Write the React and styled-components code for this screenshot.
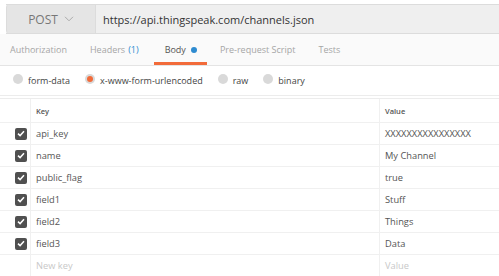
import React from 'react';
import styled, { createGlobalStyle } from 'styled-components';

const GlobalStyle = createGlobalStyle`
    html, body {
        margin: 0;
        padding: 0;
        background: #fff;
        font-family: "Open Sans", "Liberation Sans", sans-serif;
    }
`;

const Page = styled.div`
    width: 499px;
    height: 276px;
    overflow: hidden;
    padding-top: 4px;
    box-sizing: border-box;
`;

// 요청 바
const RequestBar = styled.div`
    display: flex;
    height: 30px;
    margin-left: 6px;
    border-top: 1px solid #dcdcdc;
    border-bottom: 1px solid #dcdcdc;
    box-sizing: border-box;
    background: #efefef;
`;

const Method = styled.div`
    width: 88px;
    display: flex;
    align-items: center;
    justify-content: center;
    gap: 6px;
    background: #e5e5e5;
    border-left: 1px solid #dcdcdc;
    border-right: 1px solid #dcdcdc;
    border-radius: 3px 0 0 3px;
    color: #777;
    font-size: 12px;
`;

const Url = styled.div`
    flex: 1;
    display: flex;
    align-items: center;
    padding-left: 7px;
    color: #333;
    font-size: 11px;
`;

const Tabs = styled.div`
    display: flex;
    height: 32px;
    background: #fafafa;
    border-bottom: 1px solid #e4e4e4;
    box-sizing: border-box;
    padding-left: 10px;
    gap: 23px;
`;

const Tab = styled.div`
    display: flex;
    align-items: center;
    font-size: 9px;
    color: #a6a6a6;
    padding-top: 3px;
    border-bottom: 3px solid transparent;
    ${p => p.$active && `
        color: #555;
        padding: 3px 10px 0 11px;
        margin: 0 -10px 0 -8px;
        border-bottom-color: #f26b3a;
    `}
`;

const Count = styled.span`
    color: #2e8bd0;
    margin-left: 3px;
`;

const Dot = styled.span`
    width: 6px;
    height: 6px;
    border-radius: 50%;
    background: #2e8bd0;
    margin-left: 5px;
`;

const Radios = styled.div`
    display: flex;
    align-items: center;
    height: 30px;
    padding-left: 13px;
    gap: 15px;
    border-bottom: 1px solid #ececec;
    box-sizing: border-box;
`;

const RadioItem = styled.div`
    display: flex;
    align-items: center;
    gap: 5px;
    font-size: 9px;
    color: #444;
`;

const RadioCircle = styled.span`
    width: 10px;
    height: 10px;
    border-radius: 50%;
    background: #d9d9d9;
    display: flex;
    align-items: center;
    justify-content: center;
    margin-top: -4px;
    &::after {
        content: '';
        width: 6px;
        height: 6px;
        border-radius: 50%;
        background: ${p => (p.$checked ? '#f26b3a' : 'transparent')};
    }
`;

const Table = styled.div`
    margin-top: 2px;
    border-top: 1px solid #ececec;
`;

const Row = styled.div`
    display: grid;
    grid-template-columns: 30px 349px 1fr;
    height: ${p => (p.$head ? '24px' : '22px')};
    border-bottom: 1px solid #f0f0f0;
    box-sizing: border-box;
`;

const Cell = styled.div`
    display: flex;
    align-items: center;
    padding-left: ${p => (p.$check ? '0' : '5px')};
    justify-content: ${p => (p.$check ? 'flex-end' : 'flex-start')};
    border-left: ${p => (p.$check ? 'none' : '1px solid #f0f0f0')};
    font-size: ${p => (p.$head ? '7.5px' : '9.3px')};
    font-weight: ${p => (p.$head ? 600 : 400)};
    color: ${p => (p.$muted ? '#c8c8c8' : '#555')};
    padding-right: ${p => (p.$check ? '3px' : '0')};
`;

const Check = styled.span`
    width: 12px;
    height: 12px;
    border-radius: 2px;
    background: #505050;
    display: flex;
    align-items: center;
    justify-content: center;
`;

const rows = [
    ['api_key', 'XXXXXXXXXXXXXXXX'],
    ['name', 'My Channel'],
    ['public_flag', 'true'],
    ['field1', 'Stuff'],
    ['field2', 'Things'],
    ['field3', 'Data'],
];

function Tick() {
    return (
        <svg width="8" height="7" viewBox="0 0 8 7">
            <path d="M1 3.6 L3.1 5.6 L7 1.3" fill="none" stroke="#fff" strokeWidth="1.5" />
        </svg>
    );
}

function Chevron() {
    return (
        <svg width="10" height="6" viewBox="0 0 10 6">
            <path d="M1 0.8 L5 4.8 L9 0.8" fill="none" stroke="#aaa" strokeWidth="1" />
        </svg>
    );
}

export default function App() {
    return (
        <Page>
            <GlobalStyle />
            <RequestBar>
                <Method>POST <Chevron /></Method>
                <Url>https://api.thingspeak.com/channels.json</Url>
            </RequestBar>
            <Tabs>
                <Tab>Authorization</Tab>
                <Tab>Headers<Count>(1)</Count></Tab>
                <Tab $active>Body<Dot /></Tab>
                <Tab>Pre-request Script</Tab>
                <Tab>Tests</Tab>
            </Tabs>
            <Radios>
                <RadioItem><RadioCircle />form-data</RadioItem>
                <RadioItem><RadioCircle $checked />x-www-form-urlencoded</RadioItem>
                <RadioItem><RadioCircle />raw</RadioItem>
                <RadioItem><RadioCircle />binary</RadioItem>
            </Radios>
            <Table>
                <Row $head>
                    <Cell $check />
                    <Cell $head>Key</Cell>
                    <Cell $head>Value</Cell>
                </Row>
                {rows.map(([k, v]) => (
                    <Row key={k}>
                        <Cell $check><Check><Tick /></Check></Cell>
                        <Cell>{k}</Cell>
                        <Cell>{v}</Cell>
                    </Row>
                ))}
                <Row>
                    <Cell $check />
                    <Cell $muted>New key</Cell>
                    <Cell $muted>Value</Cell>
                </Row>
            </Table>
        </Page>
    );
}
